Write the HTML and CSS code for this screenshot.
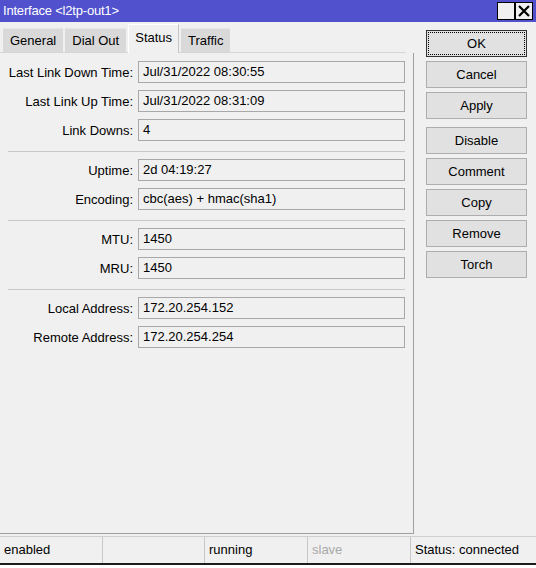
FILE: index.html
```html
<html><head><meta charset="utf-8">
    <link rel="stylesheet" href="styles.css">
</head>
<body>
<div class="window">
    <div class="titlebar">
        <span class="title">Interface &lt;l2tp-out1&gt;</span>
        <div class="titleButtons">
            <span class="tbtn"></span>
            <span class="tbtn">
                <svg width="14" height="14" viewBox="0 0 14 14"><path d="M2 2 L12 12 M12 2 L2 12" stroke="#000" stroke-width="2.2" fill="none"/></svg>
            </span>
        </div>
    </div>

    <div class="main">
        <div class="panel">
            <div class="tabs">
                <div class="tab">General</div>
                <div class="tab">Dial Out</div>
                <div class="tab active">Status</div>
                <div class="tab">Traffic</div>
            </div>
            <div class="panelBody">
                <div class="row"><label>Last Link Down Time:</label><div class="field">Jul/31/2022 08:30:55</div></div>
                <div class="row"><label>Last Link Up Time:</label><div class="field">Jul/31/2022 08:31:09</div></div>
                <div class="row"><label>Link Downs:</label><div class="field">4</div></div>
                <div class="sep"></div>
                <div class="row"><label>Uptime:</label><div class="field">2d 04:19:27</div></div>
                <div class="row"><label>Encoding:</label><div class="field">cbc(aes) + hmac(sha1)</div></div>
                <div class="sep"></div>
                <div class="row"><label>MTU:</label><div class="field">1450</div></div>
                <div class="row"><label>MRU:</label><div class="field">1450</div></div>
                <div class="sep"></div>
                <div class="row"><label>Local Address:</label><div class="field">172.20.254.152</div></div>
                <div class="row"><label>Remote Address:</label><div class="field">172.20.254.254</div></div>
            </div>
        </div>

        <div class="buttons">
            <div class="btn default">OK</div>
            <div class="btn">Cancel</div>
            <div class="btn groupEnd">Apply</div>
            <div class="btn">Disable</div>
            <div class="btn">Comment</div>
            <div class="btn">Copy</div>
            <div class="btn">Remove</div>
            <div class="btn">Torch</div>
        </div>
    </div>

    <div class="statusbar">
        <div class="cell c1">enabled</div>
        <div class="cell c2"></div>
        <div class="cell c3">running</div>
        <div class="cell c3 dim">slave</div>
        <div class="cell last">Status: connected</div>
    </div>
</div>
</body></html>
```

FILE: styles.css
```css
body {
    margin: 0;
    background: #fff;
    font-family: "Liberation Sans", Arial, sans-serif;
    font-size: 13px;
    color: #000;
}

.window {
    width: 536px;
    height: 563px;
    background: #f0f0f0;
    border-bottom: 2px solid #1c1c1c;
    display: flex;
    flex-direction: column;
}

/* title bar */
.titlebar {
    height: 22px;
    flex: none;
    background: #5151cd;
    color: #fff;
    display: flex;
    justify-content: space-between;
    padding: 0 3px;
}
.title {
    line-height: 22px;
    letter-spacing: -0.2px;
}
.titleButtons {
    display: flex;
    margin-top: 2px;
}
.tbtn {
    width: 16px;
    height: 16px;
    border: 1px solid #000;
    background: #f0f0f0;
    display: flex;
    align-items: center;
    justify-content: center;
}

.main {
    flex: 1;
    display: flex;
    padding-bottom: 2px;
}

/* left side with the tabs */
.panel {
    width: 414px;
    display: flex;
    flex-direction: column;
}
.tabs {
    height: 30px;
    flex: none;
    display: flex;
    align-items: flex-end;
    gap: 2px;
    padding-left: 3px;
    margin-right: 8px;
    border-bottom: 1px solid #d6d6d6;
}
.tab {
    height: 24px;
    line-height: 24px;
    padding: 0 7px;
    background: #d9d9d9;
    border-top: 1px solid #e6e6e6;
    box-sizing: border-box;
}
.tab.active {
    height: 29px;
    line-height: 26px;
    margin-bottom: -1px;
    padding: 0 6px;
    background: #f0f0f0;
    border-top: 1px solid #fff;
    border-left: 1px solid #fff;
    border-right: 1px solid #c4c4c4;
}

.panelBody {
    flex: 1;
    padding-top: 8px;
    border-right: 1px solid #a0a0a0;
    border-bottom: 1px solid #a0a0a0;
}
.row {
    display: flex;
    align-items: center;
    height: 22px;
    margin-bottom: 7px;
}
.row label {
    width: 138px;
    padding-right: 5px;
    box-sizing: border-box;
    text-align: right;
}
.field {
    width: 267px;
    height: 22px;
    box-sizing: border-box;
    border: 1px solid #a8a8a8;
    padding-left: 4px;
    line-height: 20px;
}
/* margin-top collapses with the row's 7px below it */
.sep {
    width: 397px;
    margin: 10px 0 7px 8px;
    border-top: 1px solid #c9c9c9;
}

/* right column of buttons */
.buttons {
    margin: 8px 0 0 12px;
    width: 101px;
}
.btn {
    height: 27px;
    line-height: 25px;
    box-sizing: border-box;
    margin-bottom: 4px;
    text-align: center;
    background: #e1e1e1;
    border: 1px solid #adadad;
}
.btn.groupEnd {
    margin-bottom: 8px;
}
.btn.default {
    position: relative;
    border-color: #333;
}
.btn.default::before {
    content: "";
    position: absolute;
    top: 1px;
    left: 1px;
    right: 1px;
    bottom: 1px;
    border: 1px dotted #000;
}

/* status bar */
.statusbar {
    height: 27px;
    flex: none;
    display: flex;
    border-top: 1px solid #d0d0d0;
    box-sizing: border-box;
}
.cell {
    line-height: 26px;
    padding-left: 4px;
    box-sizing: border-box;
    white-space: nowrap;
}
.c1 { width: 102px; }
.c2 { width: 102px; border-left: 1px solid #c8c8c8; }
.c3 { width: 103px; border-left: 1px solid #c8c8c8; }
.last { flex: 1; border-left: 1px solid #c8c8c8; }
.dim { color: #a8a8a8; }
```
